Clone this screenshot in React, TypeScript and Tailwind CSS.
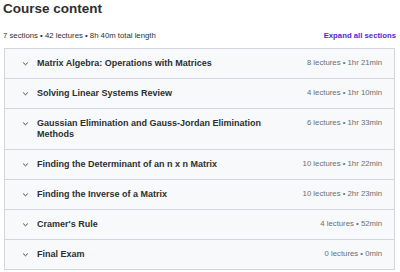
const sections = [
  { title: "Matrix Algebra: Operations with Matrices", meta: "8 lectures • 1hr 21min" },
  { title: "Solving Linear Systems Review", meta: "4 lectures • 1hr 10min" },
  { title: "Gaussian Elimination and Gauss-Jordan Elimination Methods", meta: "6 lectures • 1hr 33min" },
  { title: "Finding the Determinant of an n x n Matrix", meta: "10 lectures • 1hr 22min" },
  { title: "Finding the Inverse of a Matrix", meta: "10 lectures • 2hr 23min" },
  { title: "Cramer's Rule", meta: "4 lectures • 52min" },
  { title: "Final Exam", meta: "0 lectures • 0min" },
];

function Chevron() {
  return (
    <svg width="7" height="11" viewBox="0 0 7 11" className="shrink-0">
      <polyline points="1.2,4.6 3.5,6.8 5.8,4.6" fill="none" stroke="#3e4143" strokeWidth="1" />
    </svg>
  );
}

function App() {
  return (
    <div className="w-[400px] h-[272px] bg-white pl-[3px] pr-[4px] font-['Liberation_Sans',Arial,sans-serif] text-[#2d2f31] overflow-hidden">
      <h2 className="pt-[1px] text-[13.5px] leading-[16px] font-bold">Course content</h2>

      <div className="mt-[14px] flex items-end justify-between">
        <span className="text-[7.75px] leading-[10px] text-[#2d2f31]">7 sections • 42 lectures • 8h 40m total length</span>
        <button className="text-[7.75px] leading-[10px] font-bold text-[#5624d0]">Expand all sections</button>
      </div>

      <div className="mt-[7px] ml-[1px] mr-[1px] border border-[#d1d7dc] bg-[#f7f9fa]">
        {sections.map((s, i) => (
          <div
            key={s.title}
            className={`flex items-start pl-[17px] pr-[12px] py-[9px] ${i > 0 ? "border-t border-[#d1d7dc]" : ""}`}
          >
            <Chevron />
            <div className="ml-[8px] flex-1 text-[9px] leading-[10.75px] font-bold">{s.title}</div>
            <div className="ml-6 shrink-0 text-[7.75px] leading-[10.75px] text-[#6a6f73]">{s.meta}</div>
          </div>
        ))}
      </div>
    </div>
  );
}

export default App;
